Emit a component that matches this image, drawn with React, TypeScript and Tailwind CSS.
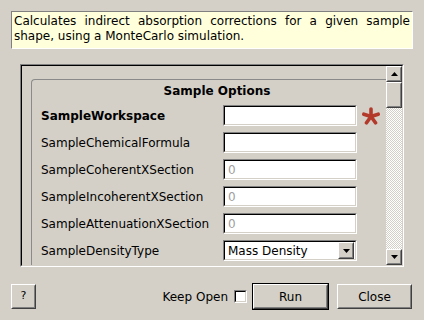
import React from 'react';

const Sunken = ({ className = '', children }: { className?: string; children?: React.ReactNode }) => (
  <div className={`border border-t-[#808080] border-l-[#808080] border-b-white border-r-white ${className}`}>
    <div className="flex h-full w-full items-center border border-t-black border-l-black border-b-[#d4d0c8] border-r-[#d4d0c8] bg-white">
      {children}
    </div>
  </div>
);

const Raised = ({ className = '', children }: { className?: string; children?: React.ReactNode }) => (
  <div className={`border border-t-white border-l-white border-b-[#404040] border-r-[#404040] ${className}`}>
    <div className="flex h-full w-full items-center justify-center border border-t-[#d4d0c8] border-l-[#d4d0c8] border-b-[#808080] border-r-[#808080] bg-[#d4d0c8]">
      {children}
    </div>
  </div>
);

const Arrow = ({ up }: { up?: boolean }) => (
  <svg width="7" height="4" viewBox="0 0 7 4">
    <path d={up ? 'M3.5 0L7 4H0Z' : 'M0 0H7L3.5 4Z'} fill="#000" />
  </svg>
);

// required-field marker
const Star = () => (
  <svg width="18" height="18" viewBox="0 0 18 18" className="ml-[5px]">
    <g stroke="#b3392b" strokeWidth="3.6" strokeLinecap="round">
      <line x1="9" y1="9.5" x2="9" y2="2" />
      <line x1="9" y1="9.5" x2="16.2" y2="7.2" />
      <line x1="9" y1="9.5" x2="13.5" y2="15.8" />
      <line x1="9" y1="9.5" x2="4.5" y2="15.8" />
      <line x1="9" y1="9.5" x2="1.8" y2="7.2" />
    </g>
  </svg>
);

const rows = [
  { label: 'SampleChemicalFormula', value: '' },
  { label: 'SampleCoherentXSection', value: '0' },
  { label: 'SampleIncoherentXSection', value: '0' },
  { label: 'SampleAttenuationXSection', value: '0' },
];

export default function App() {
  return (
    <div className="flex h-[320px] w-[424px] flex-col overflow-hidden bg-[#d4d0c8] font-['DejaVu_Sans',sans-serif] text-[12px] text-black">
      <div className="ml-[11px] mt-[11px] h-[38px] w-[402px] border border-t-[#808080] border-l-[#808080] border-b-white border-r-white bg-[#ffffdc] px-[2px] pt-[2px] text-justify leading-[15px] [text-align-last:left]">
        Calculates indirect absorption corrections for a given sample shape, using a MonteCarlo simulation.
      </div>

      <div className="ml-[20px] mt-[15px] h-[203px] w-[384px] border border-t-[#808080] border-l-[#808080] border-b-white border-r-white">
        <div className="flex h-full w-full border border-t-black border-l-black border-b-[#d4d0c8] border-r-[#d4d0c8]">
          <div className="flex-1 overflow-hidden pl-[9px] pt-[13px]">
            <div className="w-[362px] rounded-t-[4px] border-l border-t border-[#8a8a8a] pb-[30px] pl-[9px]">
              <div className="mt-[4px] text-center font-bold leading-[15px]">Sample Options</div>
              <div className="mt-[6px] flex flex-col gap-[6px]">
                <div className="flex h-[21px] items-center">
                  <span className="w-[182px] font-bold">SampleWorkspace</span>
                  <Sunken className="h-[21px] w-[134px]" />
                  <Star />
                </div>
                {rows.map((r) => (
                  <div key={r.label} className="flex h-[21px] items-center">
                    <span className="w-[182px]">{r.label}</span>
                    <Sunken className="h-[21px] w-[134px]">
                      <span className="pl-[3px] text-[#a0a0a0]">{r.value}</span>
                    </Sunken>
                  </div>
                ))}
                <div className="flex h-[21px] items-center">
                  <span className="w-[182px]">SampleDensityType</span>
                  <Sunken className="h-[21px] w-[134px]">
                    <span className="flex-1 pl-[3px]">Mass Density</span>
                    <Raised className="mr-[1px] h-[17px] w-[16px]">
                      <Arrow />
                    </Raised>
                  </Sunken>
                </div>
              </div>
            </div>
          </div>
          <div className="flex w-[16px] flex-col">
            <Raised className="h-[16px] w-[16px]">
              <Arrow up />
            </Raised>
            <Raised className="h-[26px] w-[16px]" />
            <div className="flex-1 bg-[image:repeating-conic-gradient(#ffffff_0%_25%,#d4d0c8_0%_50%)] bg-[length:2px_2px]" />
            <Raised className="h-[16px] w-[16px]">
              <Arrow />
            </Raised>
          </div>
        </div>
      </div>

      <div className="mt-[16px] flex items-center pl-[11px] pr-[12px]">
        <Raised className="h-[25px] w-[25px]">
          <span className="text-[11px]">?</span>
        </Raised>
        <div className="flex-1" />
        <span>Keep Open</span>
        <Sunken className="ml-[6px] h-[13px] w-[13px]" />
        <div className="ml-[5px] border border-black">
          <Raised className="h-[25px] w-[75px]">Run</Raised>
        </div>
        <Raised className="ml-[8px] h-[25px] w-[75px]">Close</Raised>
      </div>
    </div>
  );
}
